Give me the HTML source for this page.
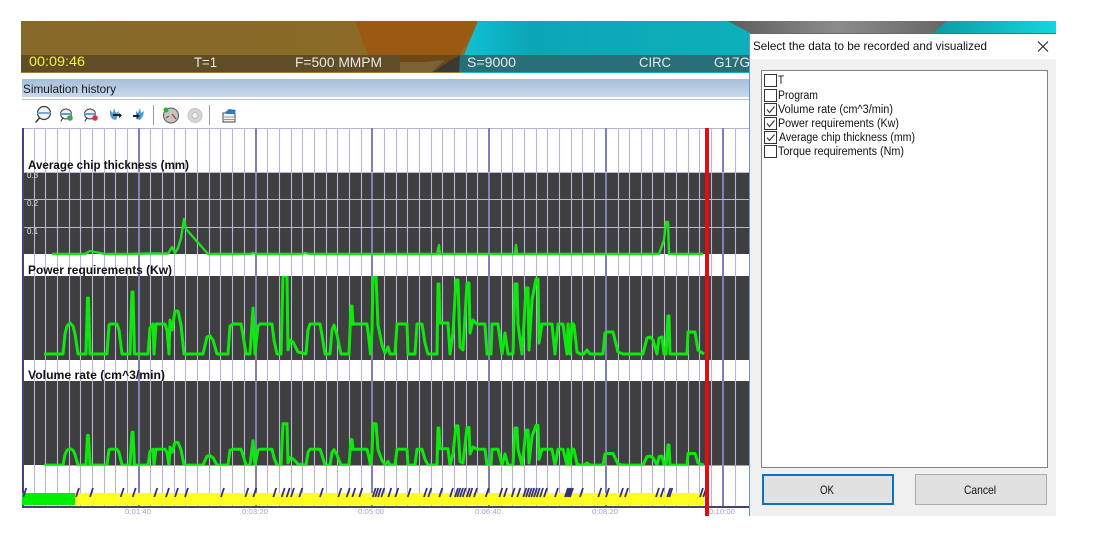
<!DOCTYPE html>
<html><head><meta charset="utf-8"><title>Simulation history</title>
<style>
html,body{margin:0;padding:0;background:#fff;width:1098px;height:558px;overflow:hidden}
svg{display:block}
text{font-family:"Liberation Sans",sans-serif}
</style></head><body>
<svg xmlns="http://www.w3.org/2000/svg" width="1098" height="558" viewBox="0 0 1098 558">
<defs>
<linearGradient id="hd" x1="0" y1="0" x2="0" y2="1"><stop offset="0" stop-color="#a6bfdc"/><stop offset="1" stop-color="#c9d8ea"/></linearGradient>
<linearGradient id="ol" x1="0" y1="0" x2="1" y2="0"><stop offset="0" stop-color="#87692a"/><stop offset="1" stop-color="#966f22"/></linearGradient>
<linearGradient id="te" x1="0" y1="0" x2="1" y2="0"><stop offset="0" stop-color="#10c4d6"/><stop offset=".25" stop-color="#0ba6b6"/><stop offset="1" stop-color="#0db0ba"/></linearGradient>
<linearGradient id="gr" x1="0" y1="0" x2="1" y2="0"><stop offset="0" stop-color="#5c5c5c"/><stop offset=".5" stop-color="#8c8c8c"/><stop offset="1" stop-color="#666"/></linearGradient>
<linearGradient id="te2" x1="0" y1="0" x2="1" y2="0"><stop offset="0" stop-color="#0c9aa4"/><stop offset="1" stop-color="#14d6de"/></linearGradient>
<clipPath id="pn"><rect x="22" y="172" width="727" height="82"/><rect x="22" y="276" width="727" height="84"/><rect x="22" y="381" width="727" height="84"/></clipPath>
<clipPath id="vc"><rect x="22" y="381" width="727" height="84"/></clipPath>
<clipPath id="pc"><rect x="22" y="276" width="727" height="84"/></clipPath>
<path id="grid" fill="none" stroke="#b6b6d6" stroke-width="1.1" d="M34.5 128V506M45.5 128V506M57.5 128V506M69.5 128V506M80.5 128V506M92.5 128V506M104.5 128V506M115.5 128V506M127.5 128V506M150.5 128V506M162.5 128V506M174.5 128V506M185.5 128V506M197.5 128V506M209.5 128V506M220.5 128V506M232.5 128V506M244.5 128V506M267.5 128V506M279.5 128V506M291.5 128V506M302.5 128V506M314.5 128V506M326.5 128V506M337.5 128V506M349.5 128V506M361.5 128V506M384.5 128V506M396.5 128V506M407.5 128V506M419.5 128V506M431.5 128V506M442.5 128V506M454.5 128V506M466.5 128V506M477.5 128V506M501.5 128V506M512.5 128V506M524.5 128V506M536.5 128V506M547.5 128V506M559.5 128V506M571.5 128V506M582.5 128V506M594.5 128V506M618.5 128V506M629.5 128V506M641.5 128V506M652.5 128V506M664.5 128V506M676.5 128V506M688.5 128V506M699.5 128V506M711.5 128V506M735.5 128V506"/>
<path id="majors" fill="none" stroke="#8080b8" stroke-width="2" d="M139 128V506M256 128V506M372 128V506M489 128V506M606 128V506M723 128V506"/>
<path id="pw" fill="none" stroke-linejoin="round" vector-effect="non-scaling-stroke" d="M44 354H63L65 334 67 326 70 323 73 326 75 334 78 354H86L87.5 298H88.5L90 354H107L109 325 110 324H117L119 330 122 354H130L132 292H133L134.5 354H148L150 328 153 324 154 354 156 324H165L167 330 169 354 170 320 172 330 175 311H178L181 325 184 354H203L207 337 210 336 213 340 217 354H228L230 326 233 324H241L243 335 246 354H250L253 308 255 354 258 326 260 324H272L274 340 277 354H281L283 276H287L288 350 290 340 293 342 298 352 306 354 308 330 310 324H320L322 335 325 354H330L332 330 334 325 337 335 341 354H349L351 306H352L353 324H367L369 340 370.5 354 372 330 373 276H376L378 325 382 345 385 353 388 347 390 354H395L397 324H407L408 354H415L417 324H422L425 343 428 354H437L438 284H439L440 323H448L450 354 453 333 456 280H458L460 347 463 350 467 283H469L470 333 473 320 477 324H485L487 354H491L492 324H498L502 354 505 333 508 354H513L515 284H517L518 324 522 354 524 323 526 288H528L529 350 532 300 536 279H538L539 343 542 324H552L555 354 558 324H563L567 354 568 324 570 354 572 323 574 325 577 352 580 354H584L587 350 590 354H603L605 333 607 332H613L618 352 623 354H643L647 338 650 337 653 340 657 354 659 338 662 337 664 354H666L668 316H669L670 354H687L688 332H695L698 350 704 354"/>
</defs>

<!-- banner -->
<rect x="21" y="21" width="1035" height="52" fill="url(#ol)"/>
<polygon points="355,21 480,21 470,38 460,55 458,73 372,73 368,55 362,40" fill="#9b5a12"/>
<polygon points="478,21 728,21 750,33 750,73 458,73 466,50" fill="url(#te)"/>
<polygon points="728,21 947,21 933,33 750,33" fill="url(#gr)"/>
<polygon points="947,21 1056,21 1056,33 933,33" fill="url(#te2)"/>
<rect x="21" y="55" width="379" height="17" fill="#5f4d25"/>
<rect x="400" y="55" width="60" height="17" fill="#6e4717"/>
<polygon points="400,62 425,62 445,60 432,72 400,72" fill="#7a6234"/>
<polygon points="432,73 448,62 460,55 465,55 460,73" fill="#3a3a32"/>
<polygon points="460,55 750,55 750,72 459,72" fill="#2a6f78"/>
<rect x="21" y="72" width="440" height="1" fill="#a07a30"/>
<text x="29" y="66" font-size="14" fill="#f2f23c" textLength="56" lengthAdjust="spacingAndGlyphs">00:09:46</text>
<text x="194" y="67" font-size="14" fill="#e8e8e8" textLength="23" lengthAdjust="spacingAndGlyphs">T=1</text>
<text x="295" y="67" font-size="14" fill="#e8e8e8" textLength="87" lengthAdjust="spacingAndGlyphs">F=500 MMPM</text>
<text x="467" y="67" font-size="14" fill="#e8e8e8" textLength="49" lengthAdjust="spacingAndGlyphs">S=9000</text>
<text x="639" y="67" font-size="14" fill="#e8e8e8" textLength="32" lengthAdjust="spacingAndGlyphs">CIRC</text>
<text x="714" y="67" font-size="14" fill="#e8e8e8" textLength="36" lengthAdjust="spacingAndGlyphs">G17G</text>

<!-- header -->
<rect x="22" y="79" width="728" height="18" fill="url(#hd)"/>
<text x="23" y="93" font-size="12" fill="#1a1a1a" textLength="93" lengthAdjust="spacingAndGlyphs">Simulation history</text>
<rect x="22" y="99" width="728" height="1" fill="#c4c4cc"/>
<rect x="22" y="128" width="728" height="1" fill="#b4b4d0"/>

<!-- toolbar -->
<g fill="none" stroke-linecap="round">
<circle cx="44" cy="113" r="6.5" fill="#eef3f8" stroke="#3c3c3c" stroke-width="1.2"/><path d="M38 113H50" stroke="#7da6cf" stroke-width="2"/><path d="M39.5 118L36 122" stroke="#333" stroke-width="1.4"/>
<ellipse cx="66" cy="114" rx="5.5" ry="5" fill="#eef3f8" stroke="#445" stroke-width="1"/><path d="M61 114H71" stroke="#6a9ccc" stroke-width="2"/><path d="M63 118L61 121" stroke="#333"/><circle cx="70" cy="118" r="2.8" fill="#3aa83a"/>
<ellipse cx="90" cy="114" rx="5.5" ry="5" fill="#eef3f8" stroke="#445" stroke-width="1"/><path d="M85 114H95" stroke="#6a9ccc" stroke-width="2"/><path d="M87 118L85 121" stroke="#333"/><circle cx="95" cy="118" r="2.8" fill="#e03040"/>
</g>
<path d="M110 110L113 113 114 108 116 113 119 111 118 115 116 120 112 119 110 115Z" fill="#4d9cd8"/><path d="M113 115H121" stroke="#222" stroke-width="2"/><path d="M119 113L122 115.500 119 118Z" fill="#222"/>
<path d="M136 111L138 113 140 108 141 113 144 111 143 116 140 120 136 119 136 115Z" fill="#4d9cd8"/><path d="M133 116H139" stroke="#222" stroke-width="2"/><path d="M137 113.500L140 116 137 118.500Z" fill="#222"/>
<rect x="153" y="105" width="1" height="20" fill="#9a9a9a"/>
<circle cx="171" cy="115.500" r="7.500" fill="#c4c4c4" stroke="#555" stroke-width="1"/><circle cx="166" cy="110" r="2.500" fill="#30b030"/><path d="M172 114L176 119" stroke="#d03030" stroke-width="1.300"/><path d="M166 118L169 116" stroke="#444"/>
<circle cx="195" cy="115.500" r="7" fill="#d6d6d6" stroke="#c4c4c4"/><circle cx="195" cy="115.500" r="3" fill="#efefef" stroke="#bbb"/>
<rect x="209" y="105" width="1" height="20" fill="#9a9a9a"/>
<rect x="223" y="113" width="12" height="9" fill="#f4f4f4" stroke="#444"/><path d="M224 117H234M224 119.500H234" stroke="#777" stroke-width=".8"/><path d="M224 113L229 109 236 110 234 114 227 114Z" fill="#2a7cc4"/>

<!-- chart grid on white -->
<use href="#grid"/><use href="#majors"/>
<path d="M23 128V506" stroke="#44447c" stroke-width="2"/>
<rect x="22" y="506" width="727" height="2" fill="#44446e"/>

<!-- titles -->
<text x="28" y="169" font-size="12" font-weight="bold" fill="#111" textLength="161" lengthAdjust="spacingAndGlyphs">Average chip thickness (mm)</text>
<text x="28" y="274" font-size="12" font-weight="bold" fill="#111" textLength="144" lengthAdjust="spacingAndGlyphs">Power requirements (Kw)</text>
<text x="28" y="379" font-size="12" font-weight="bold" fill="#111" textLength="137" lengthAdjust="spacingAndGlyphs">Volume rate (cm^3/min)</text>

<!-- panels -->
<rect x="24" y="172" width="725" height="82" fill="#3f3f3f"/>
<rect x="24" y="276" width="725" height="84" fill="#3f3f3f"/>
<rect x="24" y="381" width="725" height="84" fill="#3f3f3f"/>
<g clip-path="url(#pn)"><use href="#grid"/><use href="#majors"/></g>
<path d="M23 172V465" stroke="#44447c" stroke-width="2"/>
<path d="M24 172.500H749M24 199.500H749M24 227.500H749" stroke="#b8b8d8"/>
<text x="27" y="178" font-size="8" fill="#e0e0e0">0.3</text>
<text x="27" y="206" font-size="8" fill="#e0e0e0">0.2</text>
<text x="27" y="234" font-size="8" fill="#e0e0e0">0.1</text>

<!-- traces -->
<path fill="none" stroke="#22dd22" stroke-width="2.400" stroke-linejoin="round" d="M52 254H85L90 251 95 252 105 254H130L150 253.500 168 253.500 172 247 175 253 178 248 181 238 184 219 186 229 208 254H250L253 253 256 254H300L305 253 310 254H437L439 245 440 254H515L516 245 517 254H659L664 240 666 222H668L669 254H703"/>
<g clip-path="url(#pc)"><use href="#pw" stroke="#0ee80e" stroke-width="3"/></g>
<g clip-path="url(#vc)"><g transform="translate(0 277.500) scale(1 .53)"><use href="#pw" stroke="#0ee80e" stroke-width="3"/></g></g>
<path d="M44 465.500H749" stroke="#56d856" stroke-width="1"/>

<!-- progress bar -->
<rect x="75" y="493" width="629" height="12" fill="#ffff22"/>
<rect x="22" y="493" width="53" height="12" fill="#00ee00"/>
<path fill="none" stroke="#33336e" stroke-width="1.800" d="M23.300 497l3-9M76 497l3-9M90 497l3-9M120.700 497l3-9M132.700 497l3-9M154.300 497l3-9M166 497l3-9M175 497l3-9M185 497l3-9M221 497l3-9M245.300 497l3-9M253.300 497l3-9M273.300 497l3-9M281.700 497l3-9M286.700 497l3-9M291 497l3-9M299.300 497l3-9M320 497l3-9M338.300 497l3-9M346.700 497l3-9M352.300 497l3-9M359.300 497l3-9M372.700 497l3-9M375.300 497l3-9M378 497l3-9M381.300 497l3-9M388.300 497l3-9M395.300 497l3-9M407.700 497l3-9M424 497l3-9M428.300 497l3-9M439.300 497l3-9M450 497l3-9M455 497l3-9M457.300 497l3-9M460 497l3-9M462.700 497l3-9M466.700 497l3-9M469.300 497l3-9M474 497l3-9M485.700 497l3-9M499.300 497l3-9M504 497l3-9M511.700 497l3-9M517.300 497l3-9M523.300 497l3-9M526 497l3-9M528.700 497l3-9M531.300 497l3-9M534 497l3-9M536.700 497l3-9M540 497l3-9M544 497l3-9M555 497l3-9M565 497l3-9M566.700 497l3-9M568.300 497l3-9M570 497l3-9M580 497l3-9M598.300 497l3-9M606 497l3-9M620 497l3-9M625 497l3-9M656 497l3-9M660.700 497l3-9M667.300 497l3-9M669.300 497l3-9M700 497l3-9M703.300 497l3-9"/>

<!-- time labels -->
<g font-size="7.500" fill="#a2a2cc">
<text x="125" y="514" textLength="26" lengthAdjust="spacingAndGlyphs">0:01:40</text>
<text x="242" y="514" textLength="26" lengthAdjust="spacingAndGlyphs">0:03:20</text>
<text x="358" y="514" textLength="26" lengthAdjust="spacingAndGlyphs">0:05:00</text>
<text x="475" y="514" textLength="26" lengthAdjust="spacingAndGlyphs">0:06:40</text>
<text x="592" y="514" textLength="26" lengthAdjust="spacingAndGlyphs">0:08:20</text>
<text x="709" y="514" textLength="26" lengthAdjust="spacingAndGlyphs">0:10:00</text>
</g>
<!-- red cursor -->
<rect x="705" y="128" width="4" height="388" fill="#e00e12"/>

<!-- dialog -->
<rect x="749" y="33" width="307" height="483" fill="#f0f0f0"/>
<rect x="750" y="34" width="306" height="25" fill="#fff"/>
<rect x="749" y="33" width="307" height="1" fill="#2a78b8"/>
<rect x="749" y="33" width="1" height="483" fill="#5c9ed4"/>
<text x="753" y="50" font-size="12" fill="#111" textLength="234" lengthAdjust="spacingAndGlyphs">Select the data to be recorded and visualized</text>
<path d="M1038 41.500L1048 51.500M1048 41.500L1038 51.500" stroke="#222" stroke-width="1.100"/>
<rect x="761.500" y="70.500" width="286" height="397" fill="#fff" stroke="#828282"/>
<g fill="#fff" stroke="#333">
<rect x="764.500" y="74.500" width="12" height="12"/><rect x="764.500" y="89.500" width="12" height="12"/><rect x="764.500" y="103.500" width="12" height="12"/><rect x="764.500" y="117.500" width="12" height="12"/><rect x="764.500" y="131.500" width="12" height="12"/><rect x="764.500" y="145.500" width="12" height="12"/>
</g>
<path fill="none" stroke="#333" stroke-width="1.100" d="M767 109.500l2.500 3 5-6M767 123.500l2.500 3 5-6M767 137.500l2.500 3 5-6"/>
<g font-size="11.500" fill="#111">
<text x="778" y="84" textLength="6" lengthAdjust="spacingAndGlyphs">T</text>
<text x="778" y="99" textLength="40" lengthAdjust="spacingAndGlyphs">Program</text>
<text x="778" y="113" textLength="115" lengthAdjust="spacingAndGlyphs">Volume rate (cm^3/min)</text>
<text x="778" y="127" textLength="121" lengthAdjust="spacingAndGlyphs">Power requirements (Kw)</text>
<text x="779" y="141" textLength="136" lengthAdjust="spacingAndGlyphs">Average chip thickness (mm)</text>
<text x="778" y="155" textLength="126" lengthAdjust="spacingAndGlyphs">Torque requirements (Nm)</text>
</g>
<rect x="763" y="475" width="130" height="29" fill="#e1e1e1" stroke="#0f72c0" stroke-width="2"/>
<rect x="915.500" y="474.500" width="131" height="30" fill="#e1e1e1" stroke="#adadad"/>
<text x="820" y="494" font-size="12" fill="#111" textLength="14" lengthAdjust="spacingAndGlyphs">OK</text>
<text x="964" y="494" font-size="12" fill="#111" textLength="32" lengthAdjust="spacingAndGlyphs">Cancel</text>
</svg>
</body></html>
